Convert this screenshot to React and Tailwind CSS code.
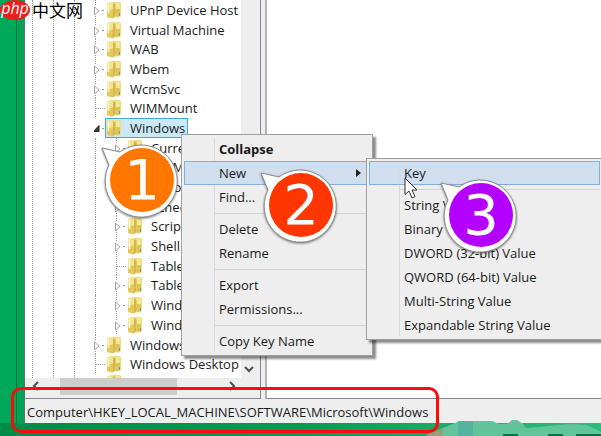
import { clsx } from 'clsx'

const treeItems = [
  { name: 'UPnP Device Host', level: 0, state: 'closed' },
  { name: 'Virtual Machine', level: 0, state: 'closed' },
  { name: 'WAB', level: 0, state: 'closed' },
  { name: 'Wbem', level: 0, state: 'closed' },
  { name: 'WcmSvc', level: 0, state: 'closed' },
  { name: 'WIMMount', level: 0, state: 'leaf' },
  { name: 'Windows', level: 0, state: 'open' },
  { name: 'Curre', level: 1, state: 'closed' },
  { name: 'DWM', level: 1, state: 'leaf' },
  { name: 'ITSto', level: 1, state: 'leaf' },
  { name: 'Sched', level: 1, state: 'closed' },
  { name: 'Script', level: 1, state: 'closed' },
  { name: 'Shell', level: 1, state: 'closed' },
  { name: 'Table', level: 1, state: 'leaf' },
  { name: 'Table', level: 1, state: 'closed' },
  { name: 'Wind', level: 1, state: 'closed' },
  { name: 'Wind', level: 1, state: 'closed' },
  { name: 'Windows', level: 0, state: 'closed' },
  { name: 'Windows Desktop S', level: 0, state: 'leaf' },
]

const keyMenu = [
  ['Collapse', 'New', 'Find...'],
  ['Delete', 'Rename'],
  ['Export', 'Permissions...'],
  ['Copy Key Name'],
]

const newMenu = [
  ['Key'],
  [
    'String Value',
    'Binary Value',
    'DWORD (32-bit) Value',
    'QWORD (64-bit) Value',
    'Multi-String Value',
    'Expandable String Value',
  ],
]

function FolderIcon() {
  return (
    <svg width="16" height="18" viewBox="0 0 16 18" className="shrink-0" aria-hidden="true">
      <path d="M6 1h7.500l1.500 1v13l-2 1.500H6z" fill="#efdc82" />
      <path d="M10 2h3.500v13H10z" fill="#f6e899" />
      <path d="M10 8h4v7l-4 1z" fill="#dfc454" />
      <path d="M1 2 6 .8l2.500 2V16L6.500 17.500 1 16z" fill="#f4e491" />
      <path d="M1 10 8 8v8.500l-1.500 1L1 16z" fill="#e4c95a" />
      <path d="M7 2 9.500 3.500V15L7 17z" fill="#d3b74c" />
      <path d="M2.500 3v9" stroke="#fcf6cb" strokeWidth="1.500" />
      <path d="M13.500 12v3" stroke="#5ea5b8" strokeWidth="1" />
    </svg>
  )
}

function Arrow({ state }) {
  return (
    <svg width="11" height="20" viewBox="0 0 11 20" className="shrink-0" aria-hidden="true">
      {state === 'closed' && (
        <>
          <path d="M1.5 0v6M1.5 16v4" stroke="#999" strokeDasharray="1 1" />
          <path d="M.5 7 5 11 .5 15z" fill="#fff" stroke="#a6a6a6" />
          <path d="M8 10.5h3" stroke="#999" strokeDasharray="2 1" />
        </>
      )}
      {state === 'open' && (
        <>
          <path d="M5 7.500v6H-.5z" fill="#404040" stroke="#262626" />
          <path d="M8 10.5h3" stroke="#999" strokeDasharray="2 1" />
        </>
      )}
      {state === 'leaf' && <path d="M1.5 0v20M2 10.5h9" stroke="#999" strokeDasharray="1 1" fill="none" />}
    </svg>
  )
}

function TreeRow({ item }) {
  const selected = item.state === 'open'
  return (
    <li
      className={clsx(
        'relative flex min-h-0 flex-1 items-center',
        item.level === 0 ? 'pl-[69px]' : 'pl-[90px]',
      )}
    >
      {item.level === 1 && <span className="absolute inset-y-0 left-[70px] border-l border-dotted border-[#999]" />}
      <Arrow state={item.state} />
      <button
        className={clsx(
          'flex h-5 items-center gap-2 whitespace-nowrap border pr-[2px]',
          selected ? 'border-[#3fa9df] bg-[#cbe8f6]' : 'border-transparent',
        )}
      >
        <FolderIcon />
        {item.name}
      </button>
    </li>
  )
}

function Menu({ label, groups, active, bold, arrow, className }) {
  return (
    <div
      role="menu"
      aria-label={label}
      className={clsx(
        'absolute border border-[#a0a0a0] bg-[#eee] p-[2px] shadow-[3px_3px_2px_rgba(0,0,0,0.45)]',
        className,
      )}
    >
      <span className="absolute inset-y-[3px] left-8 border-l border-[#dadada]" />
      {groups.map((group, i) => (
        <div key={i} className={clsx(i > 0 && 'mt-1')}>
          {i > 0 && <hr className="mb-[3px] ml-[30px] border-[#d4d4d4]" />}
          {group.map(name => (
            <button
              key={name}
              role="menuitem"
              className={clsx(
                'relative flex h-6 w-full items-center justify-between whitespace-nowrap border pl-[34px] pr-2',
                name === active ? 'border-[#7eb0e4] bg-[#cddcec]/95' : 'border-transparent',
                name === bold && 'font-bold',
              )}
            >
              {name}
              {name === arrow && (
                <svg width="5" height="8" viewBox="0 0 5 8" aria-hidden="true">
                  <path d="M0 0 5 4 0 8z" fill="#222" />
                </svg>
              )}
            </button>
          ))}
        </div>
      ))}
    </div>
  )
}

function Callout({ number, color, className }) {
  return (
    <div className={clsx('absolute flex h-20 w-[84px] items-center justify-center', className)}>
      <svg
        width="84"
        height="80"
        viewBox="0 0 84 80"
        className="absolute inset-0 drop-shadow-[0_1px_1px_rgba(0,0,0,0.5)]"
        aria-hidden="true"
      >
        <path d="M2 8 20 12A36 36 0 1 1 9 25z" fill="#fff" stroke="#8c8c8c" strokeLinejoin="round" />
        <circle cx="42" cy="40" r="32" fill={color} />
      </svg>
      <span className="relative font-['DejaVu_Sans',sans-serif] text-[56px] leading-none text-white">{number}</span>
    </div>
  )
}

function Logo() {
  return (
    <div className="absolute left-0 top-0 flex h-5 items-center gap-[2px]">
      <div className="flex h-5 w-[30px] items-center justify-center rounded-[50%] bg-[#ee1c1c] pb-1 font-['Open_Sans',sans-serif] text-base italic leading-4 text-white">
        php
      </div>
      <span className="font-['Noto_Sans_CJK_SC',sans-serif] text-[17px] leading-5 text-black">中文网</span>
    </div>
  )
}

export default function App() {
  return (
    <div className="relative flex h-screen flex-col overflow-hidden bg-[#00a85a] font-['Open_Sans','Noto_Sans',sans-serif] text-[13px] leading-5 text-[#1a1a1a]">
      <div className="ml-4 flex min-h-0 flex-1 flex-col border-l border-[#087a45] bg-[#06a257] pl-[7px]">
        <div className="flex min-h-0 flex-1 flex-col border-l border-[#4d7c66] bg-[#eee]">
          <div className="flex min-h-0 flex-1 gap-1">
            <div className="flex w-[236px] shrink-0 flex-col border-b border-r border-[#828790]">
              <div className="flex min-h-0 flex-1">
                <div className="relative flex min-w-0 flex-1 flex-col overflow-hidden bg-white">
                  <span className="absolute inset-y-0 left-[7px] border-l border-dotted border-[#999]" />
                  <span className="absolute inset-y-0 left-7 border-l border-dotted border-[#999]" />
                  <span className="absolute inset-y-0 left-[49px] border-l border-dotted border-[#999]" />
                  <ul className="flex min-h-0 flex-1 flex-col">
                    {treeItems.map((item, i) => (
                      <TreeRow key={i} item={item} />
                    ))}
                  </ul>
                  <div className="h-1 overflow-hidden pl-[81px]">
                    <FolderIcon />
                  </div>
                </div>
                <div className="flex w-[19px] items-end pb-1 pl-[3px]">
                  <svg width="10" height="10" viewBox="0 0 10 10" fill="none" aria-hidden="true">
                    <path d="m1 3 4 4 4-4" stroke="#505050" strokeWidth="2" />
                  </svg>
                </div>
              </div>
              <div className="flex h-5 items-start pl-[7px] pr-6">
                <svg width="8" height="16" viewBox="0 0 8 16" fill="none" aria-hidden="true">
                  <path d="M6 4 2 8l4 4" stroke="#505050" strokeWidth="2" />
                </svg>
                <div className="ml-5 h-[17px] w-[117px] bg-[#cdcdcd]" />
                <svg width="8" height="16" viewBox="0 0 8 16" fill="none" className="ml-auto" aria-hidden="true">
                  <path d="m2 4 4 4-4 4" stroke="#505050" strokeWidth="2" />
                </svg>
              </div>
            </div>
            <div className="min-w-0 flex-1 border-b border-l-2 border-[#b4b5bb] border-b-[#828790] bg-white" />
          </div>
          <div className="h-6 whitespace-nowrap pl-[2px] pt-px leading-6">
            Computer\HKEY_LOCAL_MACHINE\SOFTWARE\Microsoft\Windows
          </div>
        </div>
      </div>

      <div className="h-[13px] bg-linear-to-r from-[#008c48] via-[#079a50] to-[#2bbd80]" />
      <svg width="175" height="16" viewBox="0 0 175 16" className="absolute bottom-0 right-0" aria-hidden="true">
        <path d="M0 16 17 8l17-7h32l7 3h8l5-4h5l6 4 3 4 45-4 15 1 14 6 5 5z" fill="#62c49a" />
        <path d="M32 1h15v15H32z" fill="#55b3a0" />
        <path d="M0 15 17 8v8H0z" fill="#9a9b78" />
        <path d="M77 14h15v2H77zM122 14h15v2h-15zM150 14h25v2h-25z" fill="#067847" />
      </svg>

      <Menu
        label="Windows key"
        groups={keyMenu}
        active="New"
        bold="Collapse"
        arrow="New"
        className="left-[181px] top-[134px] w-[192px]"
      />
      <Menu label="New" groups={newMenu} active="Key" className="left-[366px] right-[-2px] top-[158px]" />

      <Callout number={1} color="#ff7600" className="left-[100px] top-[140px]" />
      <Callout number={2} color="#ff3600" className="left-[259px] top-[165px]" />
      <svg width="14" height="22" viewBox="0 0 14 22" className="absolute left-[404px] top-[177px]" aria-hidden="true">
        <path d="M1 1v16.500l4-3.500 3 7 3-1.500-3-6.500h5z" fill="#fff" stroke="#333" />
      </svg>
      <Callout number={3} color="#b400ff" className="left-[439px] top-[175px]" />

      <div className="absolute bottom-[3px] left-[11px] h-[46px] w-[428px] rounded-[10px] border-[3px] border-[#fb0b0b]" />
      <Logo />
    </div>
  )
}
